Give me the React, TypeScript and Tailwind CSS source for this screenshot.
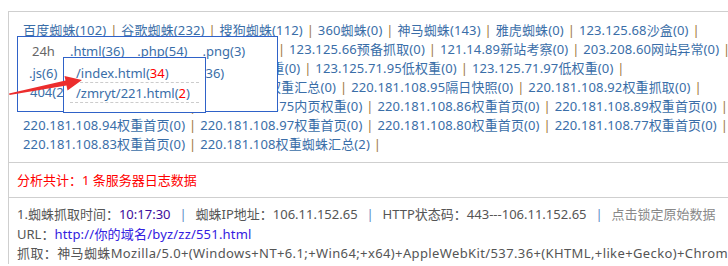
import React from "react";

const Sep = () => (
  <span className="inline-block w-[15px] text-center text-[#a0763e]">|</span>
);

const Row = ({ items, end = true }: { items: string[]; end?: boolean }) => (
  <div className="h-[19px] leading-[19px] whitespace-nowrap">
    {items.map((t, i) => (
      <React.Fragment key={i}>
        {i > 0 && <Sep />}
        <span>{t}</span>
      </React.Fragment>
    ))}
    {end && <Sep />}
  </div>
);

const BSep = () => (
  <span className="inline-block w-[25px] pl-[9px] text-[#5b8ac6]">|</span>
);

export default function App() {
  return (
    <div className="relative w-[728px] h-[266px] overflow-hidden bg-white font-['Noto_Sans','Noto_Sans_CJK_SC',sans-serif] text-[13px]">
      <div className="pt-[11px] pl-[8px]">
        <div className="border-l border-t border-[#cfcfcf]">
          <div className="pl-[14px] pt-[9px] pb-[8px] text-[#3a6ea8] overflow-hidden tracking-[0.13px]">
            <Row items={["百度蜘蛛(102)", "谷歌蜘蛛(232)", "搜狗蜘蛛(112)", "360蜘蛛(0)", "神马蜘蛛(143)", "雅虎蜘蛛(0)", "123.125.68沙盒(0)"]} />
            <Row items={["210.72.225导出(0)", "125.90.88.1低权重(0)", "123.125.66预备抓取(0)", "121.14.89新站考察(0)", "203.208.60网站异常(0)"]} />
            <Row items={["210.72.225.1抓取(0)", "123.125.71.94低权重(0)", "123.125.71.95低权重(0)", "123.125.71.97低权重(0)"]} />
            <Row items={["123.125.71.12抓取权重(0)", "220.181.108权重汇总(0)", "220.181.108.95隔日快照(0)", "220.181.108.92权重抓取(0)"]} />
            <Row items={["220.181.108.76内页权重(0)", "220.181.108.75内页权重(0)", "220.181.108.86权重首页(0)", "220.181.108.89权重首页(0)"]} />
            <Row items={["220.181.108.94权重首页(0)", "220.181.108.97权重首页(0)", "220.181.108.80权重首页(0)", "220.181.108.77权重首页(0)"]} />
            <Row items={["220.181.108.83权重首页(0)", "220.181.108权重蜘蛛汇总(2)"]} />
          </div>
          <div className="border-t border-[#cfcfcf] h-[35px] pl-[8px] leading-[35px] text-[#ff0000]">
            分析共计：1 条服务器日志数据
          </div>
          <div className="border-t border-[#cfcfcf] pl-[8px] pt-[7px] text-[#555] leading-[19.5px] whitespace-nowrap">
            <div>
              1.蜘蛛抓取时间：<span className="text-[#3c0c9c]">10:17:30</span>
              <BSep />
              蜘蛛IP地址：106.11.152.65
              <BSep />
              HTTP状态码：443---106.11.152.65
              <BSep />
              <span className="text-[#888]">点击锁定原始数据</span>
            </div>
            <div>
              URL：<span className="text-[#3320e0] tracking-[0.2px]">http://你的域名/byz/zz/551.html</span>
            </div>
            <div className="tracking-[0.38px]">
              抓取：神马蜘蛛Mozilla/5.0+(Windows+NT+6.1;+Win64;+x64)+AppleWebKit/537.36+(KHTML,+like+Gecko)+Chrome/69.0.3497.100+Safari/537.36
            </div>
          </div>
        </div>
      </div>

      {/* popup 1 */}
      <div className="absolute left-[17px] top-[36px] w-[261px] h-[76px] bg-white border border-[#2f62c8] text-[#3a6ea8] leading-[19px] pt-[5px]">
        <div className="flex whitespace-nowrap pl-[14px]">
          <span className="text-[#666] mr-[15px]">24h</span>
          <span className="mr-[13px]">.html(36)</span>
          <span className="mr-[15px]">.php(54)</span>
          <span>.png(3)</span>
        </div>
        <div className="flex whitespace-nowrap pl-[11px] mt-[3px]">
          <span className="mr-[14px]">.js(6)</span>
          <span className="mr-[14px]">.jpg(12)</span>
          <span className="mr-[14px]">.gif(8)</span>
          <span>.css(36)</span>
        </div>
        <div className="flex whitespace-nowrap pl-[12px]">
          <span>404(2)</span>
        </div>
      </div>

      {/* popup 2 */}
      <div className="absolute left-[63px] top-[57px] w-[143px] h-[56px] bg-white border border-[#2f62c8] text-[#3a6ea8] pt-[5px] px-[6px]">
        <div className="h-[20px] leading-[20px] pl-[6px] border-b border-dashed border-[#cccccc]">
          /index.html(<span className="text-[#ff0000]">34</span>)
        </div>
        <div className="h-[20px] leading-[20px] pl-[6px] border-b border-dashed border-[#cccccc]">
          /zmryt/221.html(<span className="text-[#ff0000]">2</span>)
        </div>
      </div>

      {/* red arrow */}
      <svg className="absolute left-0 top-0" width="100" height="110" viewBox="0 0 100 110">
        <polygon
          points="9,93.5 65.5,80.5 64.5,76 82,80 67.5,90.5 66.5,85.5 9.5,95"
          fill="#ec2d2d"
        />
      </svg>
    </div>
  );
}
